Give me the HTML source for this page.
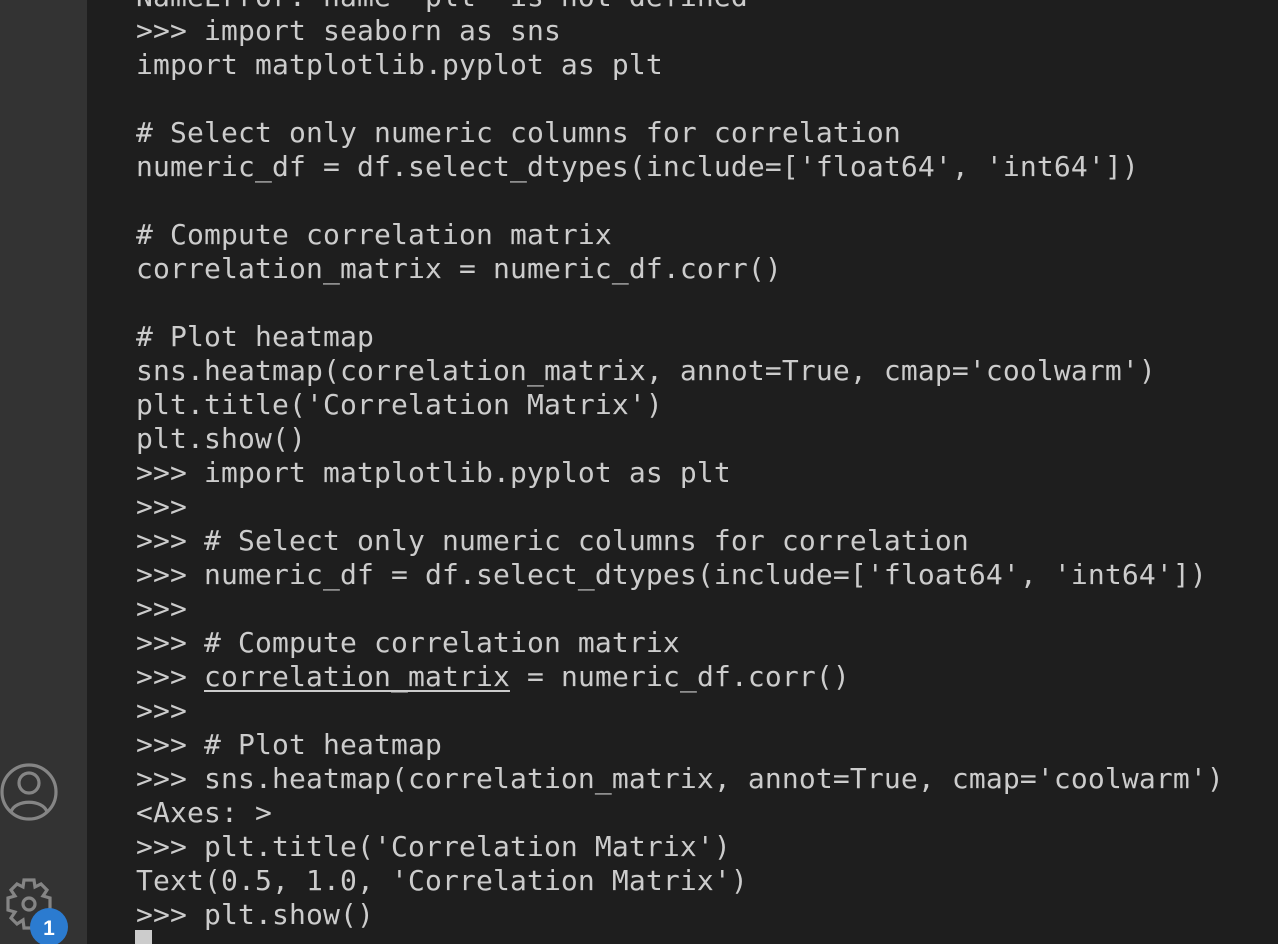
<!DOCTYPE html>
<html><head><style>
html,body{margin:0;padding:0;width:1278px;height:944px;overflow:hidden;background:#1e1e1e}
#side{position:absolute;left:0;top:0;width:87px;height:944px;background:#333333}
#term{position:absolute;left:136px;top:-20px;font-family:"DejaVu Sans Mono","Liberation Mono",monospace;font-size:28px;letter-spacing:0.14px;line-height:34px;color:#cccccc;white-space:pre}
.u{text-decoration:underline;text-underline-offset:4px}
#cur{position:absolute;left:135px;top:930px;width:17px;height:14px;background:#cccccc}
</style></head><body>
<div id="side">
<svg width="87" height="944" style="position:absolute;left:0;top:0">
<g fill="none" stroke="#858585" stroke-width="3.2">
<circle cx="29" cy="792" r="27"/>
<circle cx="29" cy="783" r="10"/>
<path d="M11 812 C15 799 43 799 47 812"/>
<path d="M24 880 L34 880 L35 887 L41 884 L47 890 L43 896 L50 898 L50 910 L43 912 L47 918 L41 924 L35 920 L34 928 L24 928 L23 920 L17 924 L11 918 L15 912 L8 910 L8 898 L15 896 L11 890 L17 884 L23 887 Z"/>
<circle cx="29" cy="904" r="6"/>
</g>
<circle cx="49" cy="927" r="19" fill="#2b7bd0"/>
<text x="49" y="935" text-anchor="middle" font-family="Liberation Sans,sans-serif" font-weight="bold" font-size="21" fill="#fff">1</text>
</svg>
</div>
<div id="term">NameError: name 'plt' is not defined
&gt;&gt;&gt; import seaborn as sns
import matplotlib.pyplot as plt

# Select only numeric columns for correlation
numeric_df = df.select_dtypes(include=['float64', 'int64'])

# Compute correlation matrix
correlation_matrix = numeric_df.corr()

# Plot heatmap
sns.heatmap(correlation_matrix, annot=True, cmap='coolwarm')
plt.title('Correlation Matrix')
plt.show()
&gt;&gt;&gt; import matplotlib.pyplot as plt
&gt;&gt;&gt;
&gt;&gt;&gt; # Select only numeric columns for correlation
&gt;&gt;&gt; numeric_df = df.select_dtypes(include=['float64', 'int64'])
&gt;&gt;&gt;
&gt;&gt;&gt; # Compute correlation matrix
&gt;&gt;&gt; <span class="u">correlation_matrix</span> = numeric_df.corr()
&gt;&gt;&gt;
&gt;&gt;&gt; # Plot heatmap
&gt;&gt;&gt; sns.heatmap(correlation_matrix, annot=True, cmap='coolwarm')
&lt;Axes: &gt;
&gt;&gt;&gt; plt.title('Correlation Matrix')
Text(0.5, 1.0, 'Correlation Matrix')
&gt;&gt;&gt; plt.show()</div>
<div id="cur"></div>
</body></html>
